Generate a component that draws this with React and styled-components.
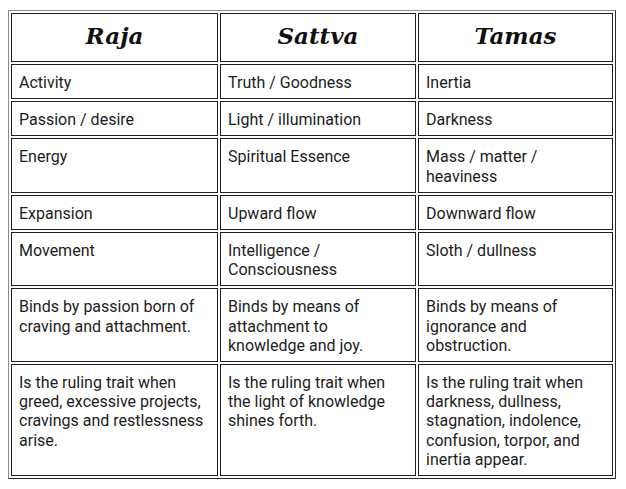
import React from "react";
import styled, { createGlobalStyle } from "styled-components";

const Global = createGlobalStyle`
  html, body { margin: 0; padding: 0; background: #ffffff; }
  body { padding: 10px 0 0 8px; }
`;

const Table = styled.table`
  border-collapse: separate;
  border-spacing: 2px;
  border: 1px solid;
  border-color: #8a8a8a #2a2a2a #2a2a2a #8a8a8a;
  table-layout: fixed;
  font-family: Roboto, "Liberation Sans", sans-serif;
  font-size: 16px;
  line-height: 19.2px;
  color: #1c1c1c;
`;

const HeadCell = styled.th`
  border: 1px solid #1e1e1e;
  padding: 9px 7px 12px;
  font-family: "DejaVu Serif", "Liberation Serif", serif;
  font-style: italic;
  font-weight: bold;
  font-size: 23px;
  line-height: 26px;
  color: #111;
  text-align: center;
  vertical-align: middle;
`;

const Cell = styled.td`
  border: 1px solid #1e1e1e;
  padding: 8px 7px 6px;
  vertical-align: top;
  text-align: left;
`;

const headers = ["Raja", "Sattva", "Tamas"];

const rows = [
  ["Activity", "Truth / Goodness", "Inertia"],
  ["Passion / desire", "Light / illumination", "Darkness"],
  ["Energy", "Spiritual Essence", "Mass / matter / heaviness"],
  ["Expansion", "Upward flow", "Downward flow"],
  ["Movement", "Intelligence / Consciousness", "Sloth / dullness"],
  [
    "Binds by passion born of craving and attachment.",
    "Binds by means of attachment to knowledge and joy.",
    "Binds by means of ignorance and obstruction.",
  ],
  [
    "Is the ruling trait when greed, excessive projects, cravings and restlessness arise.",
    "Is the ruling trait when the light of knowledge shines forth.",
    "Is the ruling trait when darkness, dullness, stagnation, indolence, confusion, torpor, and inertia appear.",
  ],
];

const widths = [207, 196, 195];

export default function App() {
  return (
    <>
      <Global />
      <Table>
        <colgroup>
          {widths.map((w, i) => (
            <col key={i} style={{ width: w }} />
          ))}
        </colgroup>
        <thead>
          <tr>
            {headers.map((h) => (
              <HeadCell key={h}>{h}</HeadCell>
            ))}
          </tr>
        </thead>
        <tbody>
          {rows.map((r, i) => (
            <tr key={i}>
              {r.map((c, j) => (
                <Cell key={j}>{c}</Cell>
              ))}
            </tr>
          ))}
        </tbody>
      </Table>
    </>
  );
}
